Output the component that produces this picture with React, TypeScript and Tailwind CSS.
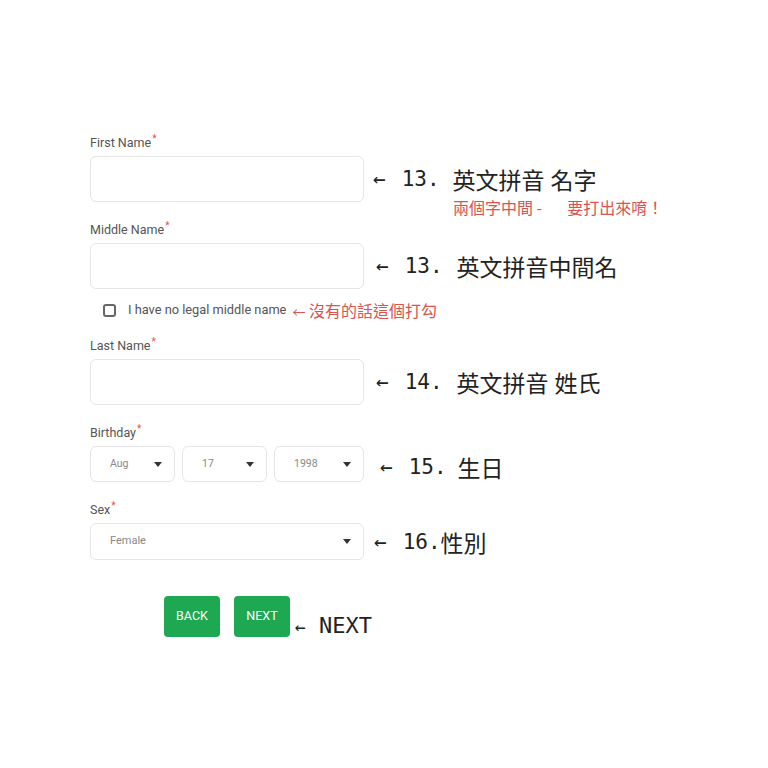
import type { ReactNode } from 'react';

const ui = { fontFamily: 'Roboto, "Noto Sans", sans-serif' };
const note = { fontFamily: '"DejaVu Sans Mono", "Noto Sans CJK TC", monospace' };
const cjk = { fontFamily: '"Noto Sans CJK TC", sans-serif' };

function Label({ children }: { children: ReactNode }) {
  return (
    <div className="h-[18px] text-[12.5px] leading-[18px] text-[#555] mb-1">
      {children}
      <span className="text-[#e05252] text-[10px] leading-[10px] align-top ml-[1px]">*</span>
    </div>
  );
}

function Note({ num, text, gap }: { num: string; text: ReactNode; gap: string }) {
  return (
    <div className="flex items-center text-[21px] leading-[28px] text-[#222] whitespace-nowrap" style={note}>
      <span>←</span>
      <span className="ml-[16px]">{num}</span>
      <span className={`${gap} text-[23px]`} style={cjk}>{text}</span>
    </div>
  );
}

function Caret() {
  return <span className="w-0 h-0 border-l-[4px] border-r-[4px] border-t-[5px] border-l-transparent border-r-transparent border-t-[#333]" />;
}

function Select({ value, w }: { value: string; w: string }) {
  return (
    <div className={`${w} h-[36px] border border-[#e6e6e6] rounded-md flex items-center justify-between pl-[19px] pr-[12px]`}>
      <span className="text-[10.5px] text-[#888]">{value}</span>
      <Caret />
    </div>
  );
}

export default function App() {
  return (
    <div className="w-[768px] h-[768px] bg-white pl-[90px] pt-[134px]" style={ui}>
      {/* First name */}
      <Label>First Name</Label>
      <div className="flex items-center gap-[9px]">
        <div className="w-[274px] h-[46px] border border-[#e6e6e6] rounded-md" />
        <div className="relative">
          <Note num="13." gap="ml-[13px]" text={<>英文拼音<span className="ml-[6px]">名字</span></>} />
          <div className="absolute left-[80px] top-[30px] text-[16px] text-[#d9534f] whitespace-nowrap" style={cjk}>
            兩個字中間 -<span className="ml-[25px]">要打出來唷！</span>
          </div>
        </div>
      </div>

      {/* Middle name */}
      <div className="mt-[19px]">
        <Label>Middle Name</Label>
        <div className="flex items-center gap-[12px]">
          <div className="w-[274px] h-[46px] border border-[#e6e6e6] rounded-md" />
          <Note num="13." gap="ml-[14px]" text="英文拼音中間名" />
        </div>
      </div>

      {/* Checkbox */}
      <div className="flex items-center h-[20px] mt-[11px] pl-[13px]">
        <span className="w-[13px] h-[13px] border-2 border-[#666] rounded-[3px]" />
        <span className="ml-[12px] text-[12.8px] text-[#555]">I have no legal middle name</span>
        <span className="ml-[6px] text-[16px] text-[#d9534f]" style={cjk}>
          <span className="text-[13px]">←</span> 沒有的話這個打勾
        </span>
      </div>

      {/* Last name */}
      <div className="mt-[17px]">
        <Label>Last Name</Label>
        <div className="flex items-center gap-[12px]">
          <div className="w-[274px] h-[46px] border border-[#e6e6e6] rounded-md" />
          <Note num="14." gap="ml-[14px]" text={<>英文拼音<span className="ml-[6px]">姓氏</span></>} />
        </div>
      </div>

      {/* Birthday */}
      <div className="mt-[19px]">
        <Label>Birthday</Label>
        <div className="flex items-center">
          <div className="flex gap-[7px] w-[274px]">
            <Select value="Aug" w="w-[85px]" />
            <Select value="17" w="w-[85px]" />
            <Select value="1998" w="w-[90px]" />
          </div>
          <div className="ml-[16px] mt-[6px]">
            <Note num="15." gap="ml-[11px]" text="生日" />
          </div>
        </div>
      </div>

      {/* Sex */}
      <div className="mt-[19px]">
        <Label>Sex</Label>
        <div className="flex items-center gap-[10px]">
          <div className="w-[274px] h-[37px] border border-[#e6e6e6] rounded-md flex items-center justify-between pl-[19px] pr-[12px]">
            <span className="text-[11px] text-[#888]">Female</span>
            <Caret />
          </div>
          <Note num="16." gap="ml-0" text="性別" />
        </div>
      </div>

      {/* Buttons */}
      <div className="flex items-start mt-[36px] pl-[74px]">
        <button className="w-[56px] h-[41px] rounded bg-[#1da851] text-white text-[12.5px]">BACK</button>
        <button className="ml-[14px] w-[56px] h-[41px] rounded bg-[#1da851] text-white text-[12.5px]">NEXT</button>
        <div className="ml-[5px] mt-[17px] text-[22px] leading-[26px] text-[#222] whitespace-nowrap" style={note}>
          <span className="text-[18px]">←</span> NEXT
        </div>
      </div>
    </div>
  );
}
